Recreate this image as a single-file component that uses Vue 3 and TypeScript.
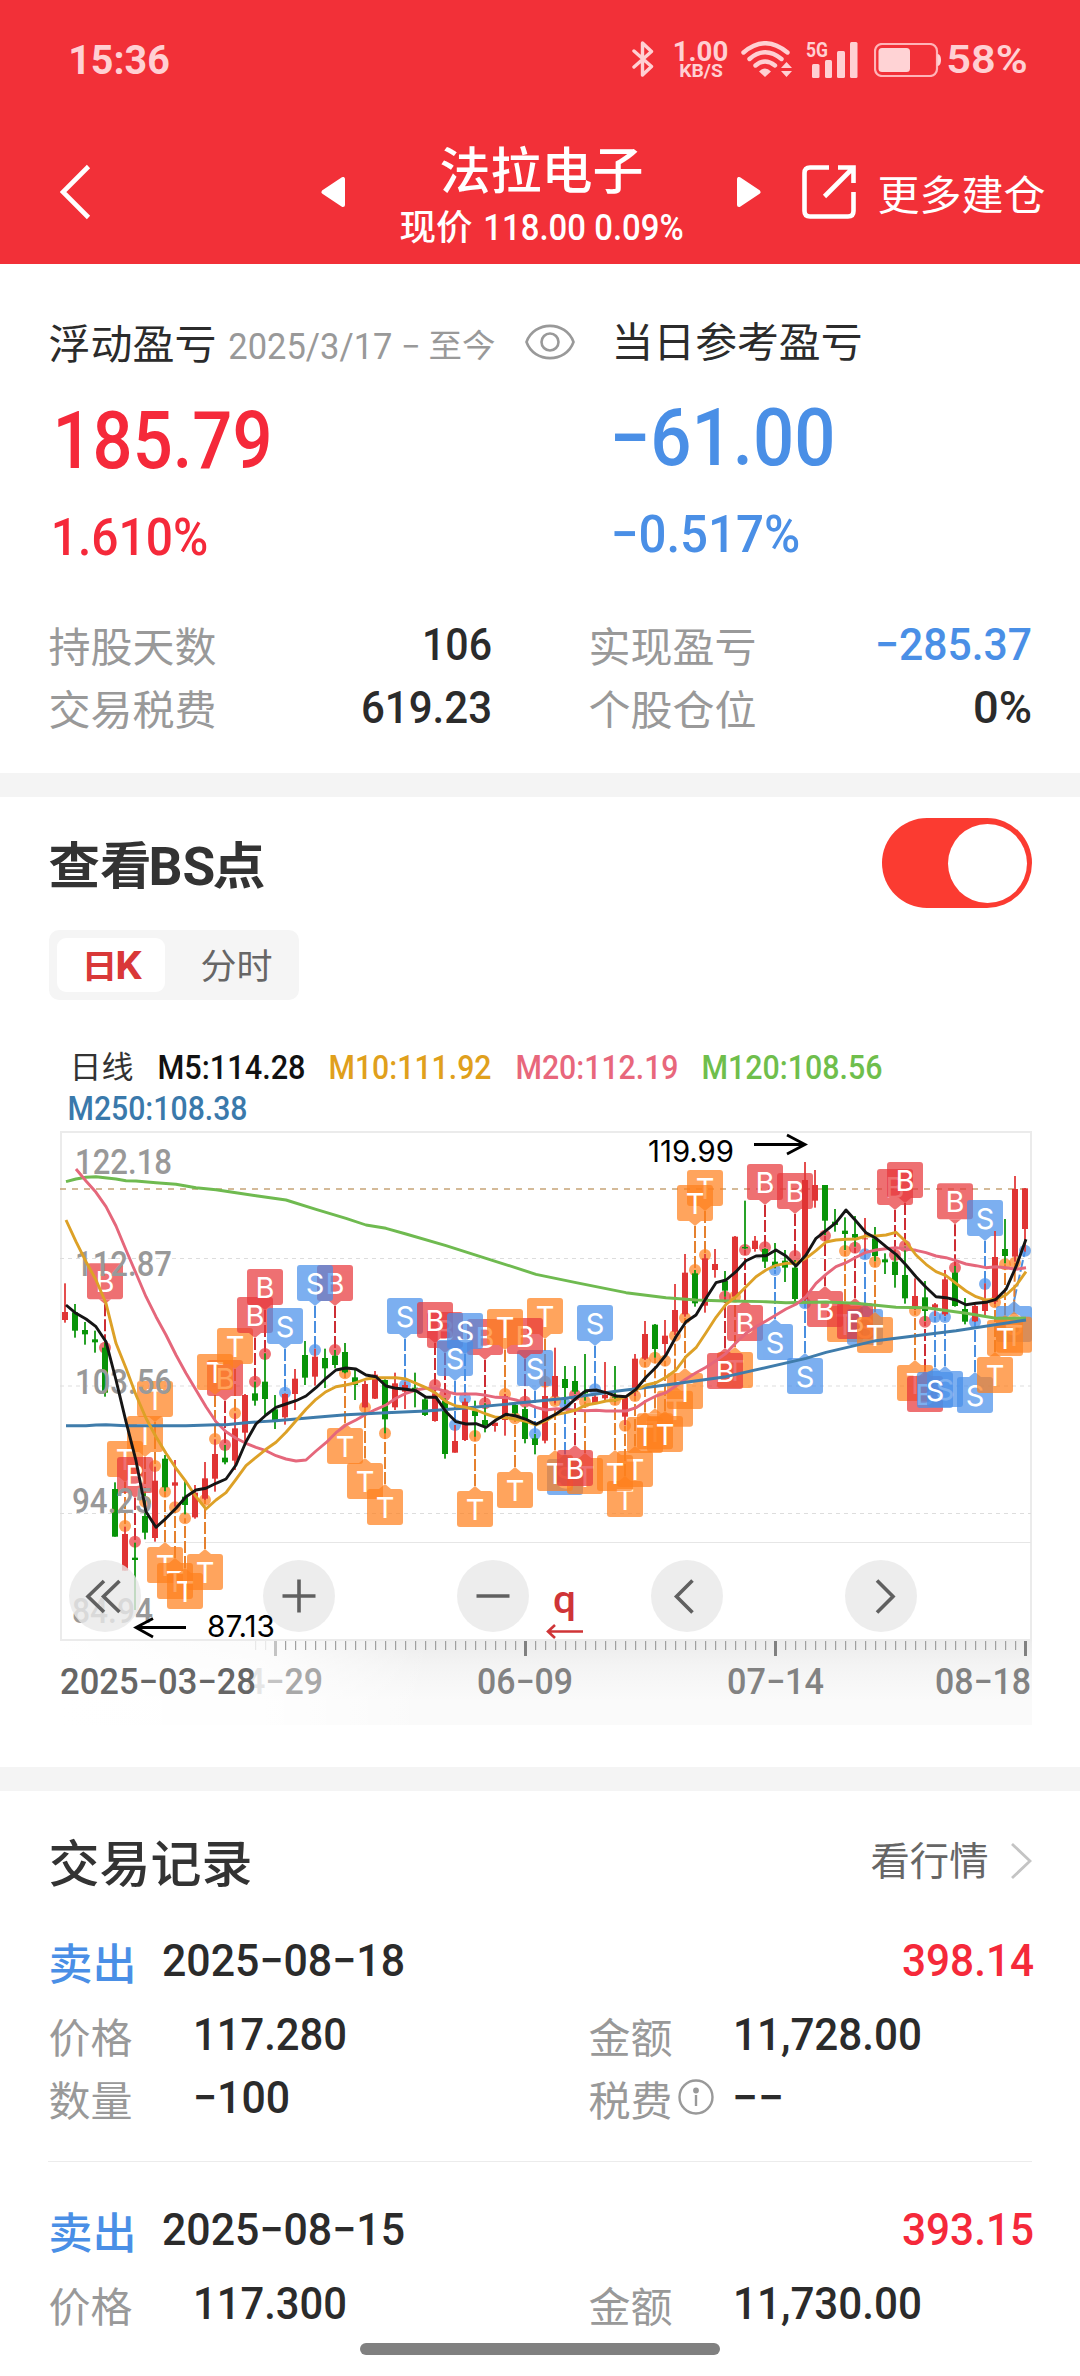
<script setup lang="ts">
import { h } from 'vue'

interface TxtProps {
  t: string
  w?: number
  cap?: number
  fs?: number
  color?: string
  weight?: number
  dy?: number
}

// Single-line label. `cap` sizes latin digits by cap height, `fs` sizes Chinese text by em box.
const Txt = (p: TxtProps) => {
  const dy = p.dy ?? 0
  const latin = p.cap !== undefined
  const size = latin ? p.cap! / 0.711 : p.fs!
  const width = p.w ?? size * p.t.length
  const height = latin ? p.cap! : size
  const bearing = latin ? size * 0.045 : 1.5
  return h('svg', { width, height, style: 'overflow:visible;flex:none;display:block' }, [
    h(
      'text',
      {
        x: -bearing,
        y: (latin ? height : size * 0.85) + dy,
        fill: p.color ?? '#2b2b2b',
        'font-size': size,
        'font-weight': p.weight ?? (latin ? 500 : 400),
        'font-family': latin ? 'Roboto, "Noto Sans", sans-serif' : '"Noto Sans CJK SC", sans-serif',
        textLength: width + bearing * 2,
        lengthAdjust: 'spacingAndGlyphs',
      },
      p.t,
    ),
  ])
}

const RED = '#f5293a'
const BLUE = '#4a8fe6'
const GREY = '#999'

const legend = [
  { t: 'M5:114.28', w: 145, c: '#111', m: 27 },
  { t: 'M10:111.92', w: 160, c: '#e0a01c', m: 26 },
  { t: 'M20:112.19', w: 160, c: '#e8677c', m: 27 },
  { t: 'M120:108.56', w: 178, c: '#6fbe4c', m: 26 },
]

// Chart geometry: one trading day every 10px, vertical data in thirds of a pixel below TOP.
const TOP = 1120
const px = (i: number) => 65 + i * 10
const py = (v: number) => TOP + v / 3

type Candle = [number, number, number, number, number] // rising, high, body top, body bottom, low
const candles: Candle[] = [
  [1, 490, 576, 600, 608], [0, 552, 577, 632, 653], [0, 606, 630, 643, 674], [0, 632, 658, 667, 698],
  [0, 668, 683, 818, 830], [0, 1087, 1107, 1250, 1250], [1, 1220, 1242, 1352, 1352], [0, 1268, 1313, 1320, 1470],
  [0, 1120, 1188, 1238, 1258], [1, 1040, 1082, 1254, 1265], [0, 1005, 1016, 1102, 1114], [1, 1020, 1087, 1097, 1160],
  [0, 1083, 1130, 1155, 1183], [1, 1095, 1118, 1192, 1196], [1, 1026, 1075, 1136, 1140], [1, 958, 1002, 1076, 1115],
  [0, 975, 1013, 1027, 1033], [1, 880, 925, 1022, 1050], [1, 822, 825, 938, 965], [0, 785, 820, 842, 857],
  [0, 700, 785, 837, 890], [0, 825, 868, 905, 927], [1, 820, 822, 892, 914], [1, 747, 776, 822, 870],
  [0, 663, 705, 773, 795], [1, 686, 710, 770, 797], [0, 686, 714, 745, 804], [0, 690, 707, 735, 745],
  [0, 669, 696, 757, 760], [0, 745, 772, 795, 840], [1, 782, 792, 862, 863], [1, 753, 764, 836, 837],
  [0, 778, 780, 898, 940], [1, 758, 790, 862, 870], [1, 785, 795, 815, 867], [0, 758, 803, 808, 862],
  [0, 830, 838, 885, 888], [1, 810, 820, 903, 905], [0, 835, 842, 1002, 1016], [1, 915, 963, 998, 998],
  [1, 835, 845, 960, 963], [0, 842, 872, 888, 950], [0, 850, 900, 915, 937], [1, 908, 908, 918, 935],
  [1, 822, 828, 900, 947], [0, 850, 855, 880, 890], [0, 860, 867, 957, 970], [0, 942, 955, 975, 1003],
  [1, 785, 828, 962, 970], [1, 683, 768, 830, 850], [0, 738, 777, 804, 852], [0, 738, 783, 815, 822],
  [0, 702, 815, 820, 842], [1, 820, 830, 850, 850], [1, 726, 825, 835, 845], [0, 738, 830, 833, 845],
  [1, 830, 832, 890, 915], [1, 702, 716, 815, 828], [1, 603, 642, 716, 720], [0, 612, 614, 687, 713],
  [1, 600, 647, 672, 705], [1, 492, 570, 635, 645], [1, 402, 458, 583, 590], [0, 450, 460, 550, 560],
  [1, 402, 415, 557, 578], [1, 387, 432, 450, 473], [0, 453, 482, 512, 530], [1, 348, 350, 530, 530],
  [0, 242, 381, 385, 388], [1, 348, 362, 387, 395], [0, 385, 387, 425, 444], [0, 369, 425, 437, 445],
  [0, 390, 422, 443, 486], [0, 420, 443, 537, 545], [1, 126, 180, 538, 545], [1, 150, 195, 242, 263],
  [0, 195, 195, 302, 345], [0, 267, 305, 315, 335], [0, 292, 332, 342, 390], [0, 288, 342, 353, 380],
  [1, 294, 355, 358, 400], [0, 321, 355, 408, 424], [0, 400, 418, 427, 462], [0, 400, 425, 465, 503],
  [0, 380, 465, 535, 551], [1, 475, 528, 560, 570], [0, 483, 532, 573, 603], [1, 549, 553, 563, 588],
  [1, 450, 478, 583, 588], [0, 438, 458, 558, 560], [0, 534, 567, 605, 613], [1, 555, 558, 604, 606],
  [1, 490, 541, 573, 585], [1, 333, 411, 545, 552], [0, 297, 387, 408, 430], [1, 168, 207, 410, 425],
  [1, 204, 205, 327, 395],
]

type Mark = [string, number, number, number] // kind, day, box top, anchor dot
const marks: Mark[] = [
  ['B', 4, 430, 683], ['T', 9, 783, 1038], ['T', 8, 888, 1145], ['T', 6, 963, 1218], ['B', 7, 1011, 1265],
  ['T', 10, 1281, 1115], ['T', 11, 1329, 1162], ['T', 12, 1359, 1195], ['T', 14, 1302, 1140],
  ['B', 16, 720, 975], ['T', 15, 702, 957], ['T', 17, 624, 880], ['B', 19, 531, 785], ['B', 20, 447, 702],
  ['S', 22, 564, 818], ['B', 27, 435, 690], ['S', 25, 435, 690], ['T', 28, 924, 760], ['T', 30, 1029, 862],
  ['T', 32, 1107, 940], ['S', 34, 534, 795], ['B', 38, 576, 825], ['B', 37, 546, 795], ['B', 42, 597, 850],
  ['S', 40, 579, 835], ['S', 39, 660, 915], ['T', 48, 534, 785], ['S', 47, 690, 942], ['B', 46, 594, 845],
  ['T', 44, 567, 822], ['S', 53, 555, 808], ['T', 41, 1113, 948], ['T', 45, 1056, 895],
  ['S', 50, 1017, 852], ['T', 49, 1005, 843], ['T', 52, 1014, 845], ['B', 51, 990, 825],
  ['T', 56, 1083, 917], ['T', 57, 993, 828], ['T', 55, 1005, 840], ['T', 59, 880, 713], ['T', 61, 812, 647],
  ['T', 58, 891, 726], ['T', 60, 888, 722], ['T', 62, 759, 594], ['T', 64, 150, 405], ['T', 63, 195, 450],
  ['T', 67, 696, 530], ['B', 66, 699, 530], ['B', 68, 555, 390], ['B', 70, 132, 382], ['S', 71, 612, 450],
  ['B', 73, 159, 408], ['S', 74, 714, 550], ['T', 78, 558, 393], ['B', 76, 513, 347], ['S', 80, 567, 403],
  ['B', 79, 549, 383], ['T', 81, 591, 426], ['B', 83, 147, 405], ['B', 84, 126, 378], ['T', 85, 735, 572],
  ['B', 86, 768, 605], ['S', 88, 753, 591], ['S', 87, 756, 591], ['B', 89, 190, 443], ['S', 92, 240, 492],
  ['S', 91, 771, 606], ['T', 93, 711, 547], ['S', 96, 558, 392], ['T', 95, 590, 428], ['T', 94, 600, 433],
]
const fills: Record<string, string> = { B: '#e8363a', S: '#478fea', T: '#ff801c' }
const strokes: Record<string, string> = { B: '#cd2d34', S: '#4a8fe0', T: '#e5812f' }
const pins = marks.map(([kind, day, top, dot]) => {
  const x = px(day)
  const cx = Math.min(x, 1014)
  const y = py(top)
  const above = top < dot
  const tip = above ? y + 41 : y - 5
  const base = above ? y + 36 : y
  return {
    kind, x, cx, y, tip, dot: py(dot), fill: fills[kind], stroke: strokes[kind],
    arrow: `M${cx - 6} ${base}L${cx} ${tip}L${cx + 6} ${base}Z`,
  }
})

const m5 = [555, 580, 597, 620, 665, 780, 905, 1022, 1175, 1222, 1195, 1165, 1130, 1110, 1105, 1090, 1077, 1035, 965, 912, 885, 862, 852, 842, 828, 803, 775, 750, 744, 747, 765, 770, 798, 805, 808, 812, 832, 832, 875, 905, 912, 911, 922, 900, 883, 888, 898, 913, 898, 882, 862, 835, 812, 810, 818, 828, 830, 808, 772, 742, 705, 650, 605, 585, 535, 488, 480, 455, 422, 408, 407, 390, 408, 438, 405, 355, 332, 308, 270, 303, 338, 355, 380, 403, 435, 470, 502, 530, 533, 540, 554, 550, 547, 538, 508, 440, 358]
const m10 = [300, 365, 425, 480, 550, 670, 745, 825, 895, 950, 1000, 1045, 1085, 1130, 1167, 1140, 1118, 1078, 1037, 1012, 988, 967, 937, 902, 868, 838, 815, 800, 795, 788, 777, 773, 773, 773, 777, 790, 803, 820, 845, 858, 862, 870, 882, 892, 893, 898, 904, 915, 902, 884, 878, 870, 855, 850, 843, 840, 830, 810, 795, 788, 772, 750, 710, 683, 638, 592, 553, 530, 500, 470, 450, 436, 430, 430, 415, 392, 366, 360, 358, 357, 348, 348, 345, 337, 365, 405, 433, 455, 467, 490, 513, 530, 540, 538, 525, 497, 455]
const m20 = [147, 183, 217, 260, 318, 390, 460, 530, 590, 645, 705, 760, 810, 860, 905, 935, 955, 970, 982, 992, 1007, 1017, 1023, 1020, 993, 968, 938, 915, 900, 883, 868, 855, 835, 820, 810, 805, 805, 815, 822, 822, 822, 826, 832, 833, 840, 850, 862, 870, 866, 868, 871, 872, 871, 873, 873, 873, 863, 843, 828, 818, 797, 777, 758, 742, 722, 700, 668, 640, 620, 603, 585, 567, 553, 530, 490, 463, 440, 428, 412, 397, 390, 386, 383, 387, 391, 398, 408, 413, 422, 432, 437, 443, 440, 443, 448, 443]
const m120: [number, number][] = [[0, 185], [1, 177], [2, 172], [3, 170], [5, 177], [6, 182], [7, 183], [9, 188], [11, 193], [13, 203], [15, 209], [17, 218], [19, 227], [22, 240], [25, 268], [28, 295], [30, 315], [32, 325], [34, 342], [38, 377], [42, 415], [47, 463], [51, 488], [56, 518], [60, 533], [63, 540], [66, 543], [70, 545], [72, 548], [76, 546], [79, 550], [83, 562], [86, 563], [90, 580], [93, 595], [96, 595]]
const m250: [number, number][] = [[0, 917], [2, 917], [3, 915], [4, 914], [6, 917], [12, 917], [15, 914], [16, 914], [18, 908], [21, 902], [25, 892], [28, 884], [32, 878], [36, 873], [40, 864], [45, 850], [50, 835], [55, 814], [60, 795], [66, 770], [74, 715], [76, 697], [81, 662], [85, 647], [89, 632], [96, 600]]
const path = (pts: [number, number][]) => pts.map(([i, v]) => `${px(i) + 1},${py(v).toFixed(1)}`).join(' ')
const series = [
  { c: '#6fba50', p: path(m120) },
  { c: '#e5677b', p: path(m20.map((v, i) => [i + 1, v] as [number, number])) },
  { c: '#3f7cab', p: path(m250) },
  { c: '#dda127', p: path(m10.map((v, i) => [i, v] as [number, number])) },
  { c: '#151515', p: path(m5.map((v, i) => [i, v] as [number, number])) },
]

const prices = [
  { t: '122.18', x: 76, y: 1174, w: 97 },
  { t: '112.87', x: 76, y: 1276, w: 97 },
  { t: '103.56', x: 76, y: 1394, w: 97 },
  { t: '94.25', x: 73, y: 1513, w: 80 },
  { t: '84.94', x: 73, y: 1623, w: 81 },
]
const dates = [
  { t: '06−09', x: 477, w: 96, c: '#828282' },
  { t: '07−14', x: 727, w: 97, c: '#828282' },
  { t: '08−18', x: 935, w: 96, c: '#828282' },
]
const ticks = Array.from({ length: 78 }, (_, k) => k + 19).filter((i) => (i - 21) % 25 !== 0)
const majors = [21, 46, 71, 96]

const records = [
  { date: '2025−08−18', profit: '398.14', price: '117.280', amount: '11,728.00', full: true },
  { date: '2025−08−15', profit: '393.15', price: '117.300', amount: '11,730.00', full: false },
]
</script>

<template>
  <div class="page">
    <header class="header">
      <div class="status">
        <Txt t="15:36" :w="98" :cap="29" color="#ffd0d3" :weight="700" />
        <div class="status-right">
          <svg width="22" height="36" viewBox="0 0 22 36" fill="none" stroke="#ffd0d3" stroke-width="3.4" stroke-linejoin="round" stroke-linecap="round"><path d="M2 10L19.500 25.500L10.500 34V2L19.500 10.500L2 26" /></svg>
          <div class="speed">
            <Txt t="1.00" :w="53" :cap="20" color="#ffd0d3" :weight="700" />
            <Txt t="KB/S" :w="42" :cap="13" color="#ffd0d3" :weight="700" />
          </div>
          <svg class="wifi" width="52" height="36" viewBox="0 0 52 36">
            <g fill="none" stroke="#ffd0d3" stroke-width="4.400" stroke-linecap="round">
              <path d="M2.500 11.500Q24 -7 46.500 11.500" /><path d="M8.500 18Q24 4.500 40.500 18" /><path d="M14.500 24.500Q24 16.500 34 24.500" />
            </g>
            <path d="M18 30.500Q24 24.500 30 30.500L24 36Z" fill="#ffd0d3" />
            <path d="M40 27L45.500 21L51 27ZM40 30L45.500 36L51 30Z" fill="#ffd0d3" />
          </svg>
          <svg class="signal" width="52" height="37" viewBox="0 0 52 37">
            <text x="0" y="16" font-family="Roboto, sans-serif" font-size="21" font-weight="700" fill="#ffd0d3" textLength="22" lengthAdjust="spacingAndGlyphs">5G</text>
            <g fill="#ffd0d3"><rect x="6" y="23" width="7.500" height="14" rx="1.500" /><rect x="19" y="19" width="7" height="18" rx="1.500" /><rect x="31" y="10" width="8" height="27" rx="1.500" /><rect x="44" y="1" width="7.500" height="36" rx="1.500" /></g>
          </svg>
          <svg class="battery" width="67" height="34" viewBox="0 0 67 34">
            <rect x="1" y="1" width="62" height="32" rx="7" fill="none" stroke="#ffb4b8" stroke-width="2.200" />
            <rect x="4.500" y="5" width="31.500" height="24" rx="3.500" fill="#ffd3d5" />
            <path d="M63.500 11H64Q67 12 67 17T64 23H63.500Z" fill="#ffd3d5" />
          </svg>
          <Txt t="58%" :w="78" :cap="27" color="#ffd0d3" :weight="600" />
        </div>
      </div>
      <div class="nav">
        <svg width="31" height="56" viewBox="0 0 31 56" fill="none" stroke="#fff" stroke-width="4.600"><path d="M28.500 2.500L3 28L28.500 53.500" /></svg>
        <svg class="prev" width="25" height="30" viewBox="0 0 25 30" fill="#fff" stroke="#fff" stroke-width="4" stroke-linejoin="round"><path d="M22 2V28L2.500 15Z" /></svg>
        <div class="title">
          <Txt t="法拉电子" :fs="50" :w="201" :weight="500" color="#fff" />
          <div class="quote">
            <Txt t="现价" :fs="35.500" :w="70" :weight="500" color="#fff" :dy="1" />
            <Txt t="118.00 0.09%" :w="197" :cap="26" color="#fff" />
          </div>
        </div>
        <svg class="next" width="25" height="30" viewBox="0 0 25 30" fill="#fff" stroke="#fff" stroke-width="4" stroke-linejoin="round"><path d="M3 2V28L22.500 15Z" /></svg>
        <svg class="share" width="54" height="54" viewBox="0 0 54 54" fill="none" stroke="#fff" stroke-width="4.600"><path d="M27 2.500H8Q2.500 2.500 2.500 8V46Q2.500 51.500 8 51.500H46Q51.500 51.500 51.500 46V27M36 2.500H51.500V18M51 3L22.500 31.500" /></svg>
        <Txt class="more" t="更多建仓" :fs="41" :w="165" :dy="3" color="#fff" />
      </div>
    </header>

    <section class="summary">
      <div class="totals">
        <div class="total">
          <div class="total-head">
            <Txt t="浮动盈亏" :fs="41" :w="165" />
            <Txt class="since" t="2025/3/17 −" :w="189" :cap="26" :dy="2" :color="GREY" :weight="400" />
            <Txt class="now" t="至今" :fs="32" :w="64" :dy="2" :color="GREY" />
            <svg class="eye" width="50" height="36" viewBox="0 0 50 36" fill="none" stroke="#999" stroke-width="2.600"><path d="M1.500 18C9 -3.500 41 -3.500 48.500 18C41 39.500 9 39.500 1.500 18Z" /><circle cx="25" cy="18" r="8.500" /></svg>
          </div>
          <Txt class="big" t="185.79" :w="213" :cap="56" :color="RED" />
          <Txt class="rate" t="1.610%" :w="153" :cap="37" :color="RED" />
        </div>
        <div class="total today">
          <div class="total-head"><Txt t="当日参考盈亏" :fs="41" :w="248" :dy="1.500" /></div>
          <Txt class="big" t="−61.00" :w="219" :cap="56" :color="BLUE" />
          <Txt class="rate" t="−0.517%" :w="185" :cap="37" :color="BLUE" />
        </div>
      </div>
      <div class="stats">
        <div class="stat"><Txt t="持股天数" :fs="41" :w="165" :dy="3" :color="GREY" /><Txt t="106" :w="66" :cap="32" /></div>
        <div class="stat"><Txt t="实现盈亏" :fs="41" :w="165" :dy="3" :color="GREY" /><Txt t="−285.37" :w="153" :cap="32" :color="BLUE" /></div>
        <div class="stat"><Txt t="交易税费" :fs="41" :w="165" :dy="3" :color="GREY" /><Txt t="619.23" :w="127" :cap="32" /></div>
        <div class="stat"><Txt t="个股仓位" :fs="41" :w="165" :dy="3" :color="GREY" /><Txt t="0%" :w="55" :cap="32" /></div>
      </div>
    </section>

    <section class="points">
      <div class="points-head">
        <div class="points-title">
          <Txt t="查看" :fs="50" :w="100" :weight="700" color="#333" />
          <Txt t="BS" :cap="38" :w="62" :weight="700" color="#333" />
          <Txt t="点" :fs="50" :w="50" :weight="700" color="#333" />
        </div>
        <div class="toggle"><span class="knob"></span></div>
      </div>
      <div class="tabs">
        <div class="tab on"><Txt t="日" :fs="33" :w="33" :weight="700" color="#d93838" :dy="1" /><Txt t="K" :cap="27" :w="23" :weight="700" color="#d93838" /></div>
        <div class="tab"><Txt t="分时" :fs="35" :w="69" color="#666" :dy="1" /></div>
      </div>
      <div class="legend">
        <Txt t="日线" :fs="31" :w="61" color="#333" />
        <Txt v-for="l in legend" :key="l.t" :t="l.t" :w="l.w" :cap="24" :color="l.c" :style="{ marginLeft: l.m + 'px' }" />
      </div>
      <div class="legend second"><Txt t="M250:108.38" :w="177" :cap="24" color="#3a79ab" /></div>

      <svg class="chart" width="1080" height="642" viewBox="0 1125 1080 642">
        <defs>
          <linearGradient id="axis" x1="0" y1="0" x2="0" y2="1"><stop offset="0" stop-color="#ececec" /><stop offset=".3" stop-color="#f4f4f4" /><stop offset=".7" stop-color="#fafafa" /></linearGradient>
          <linearGradient id="fade" x1="0" y1="0" x2="1" y2="0"><stop offset="0" stop-color="#fff" /><stop offset=".55" stop-color="#fff" stop-opacity=".8" /><stop offset="1" stop-color="#fff" stop-opacity="0" /></linearGradient>
        </defs>
        <rect x="60" y="1641" width="972" height="84" fill="url(#axis)" />
        <rect x="60" y="1641" width="370" height="84" fill="url(#fade)" />
        <rect x="61" y="1132" width="970" height="508" fill="none" stroke="#ebebeb" stroke-width="2" />
        <path d="M60 1258.500H1031M60 1386H1031M60 1513.500H1031" stroke="#ddd" stroke-width="1.200" stroke-dasharray="4 4" />
        <path d="M145 1542.500H1031" stroke="#e6e6e6" stroke-width="1.200" />
        <path d="M60 1189H1031" stroke="#c6a477" stroke-width="1.700" stroke-dasharray="6 6" />

        <g v-for="(p, i) in pins" :key="'d' + i">
          <line :x1="p.cx" :y1="p.tip" :x2="p.x" :y2="p.dot" :stroke="p.stroke" stroke-width="2" stroke-dasharray="12 3" />
          <circle :cx="p.x" :cy="p.dot" r="6" :fill="p.fill" opacity=".7" />
        </g>
        <g v-for="(p, i) in pins" :key="'b' + i">
          <g :fill="p.fill" opacity=".71"><rect :x="p.cx - 18" :y="p.y" width="36" height="36" rx="3" /><path :d="p.arrow" /></g>
          <text :x="p.cx" :y="p.y + 29" class="pin">{{ p.kind }}</text>
        </g>
        <g v-for="(c, i) in candles" :key="'c' + i" :fill="c[0] ? '#e03434' : '#089408'">
          <rect :x="px(i) - 1" :y="py(c[1])" width="2" :height="(c[4] - c[1]) / 3" opacity=".87" />
          <rect :x="px(i) - 3" :y="py(c[2])" width="6" :height="(c[3] - c[2]) / 3" />
        </g>
        <text v-for="p in prices" :key="p.t" :x="p.x - 1" :y="p.y" :textLength="p.w" lengthAdjust="spacingAndGlyphs" class="price">{{ p.t }}</text>
        <polyline v-for="s in series" :key="s.c" :points="s.p" fill="none" :stroke="s.c" stroke-width="2.900" stroke-linejoin="round" />

        <g fill="none" stroke="#000" stroke-width="2.800">
          <path d="M754 1144.500H805M787 1135L805 1144.500L787 1154" />
          <path d="M186 1627.500H136M153 1618.500L136 1627.500L153 1637" />
        </g>
        <text x="648" y="1162" class="peak" textLength="86" lengthAdjust="spacingAndGlyphs">119.99</text>

        <g fill="#e9e9e9" fill-opacity=".8"><circle v-for="x in [105, 299, 493, 687, 881]" :key="x" :cx="x" cy="1596" r="36" /></g>
        <g fill="none" stroke="#606060" stroke-width="3.600">
          <path d="M104 1581L88 1596.500L104 1612M119.500 1581L103.500 1596.500L119.500 1612" />
          <path d="M282.500 1596H315.500M299 1579.500V1612.500" />
          <path d="M476.500 1596H509.500" />
          <path d="M692.500 1580.500L676.500 1596.500L692.500 1612.500" />
          <path d="M877 1580.500L893 1596.500L877 1612.500" />
        </g>
        <text x="207" y="1637" class="peak" textLength="68" lengthAdjust="spacingAndGlyphs">87.13</text>
        <text x="553" y="1613" class="right-mark" textLength="23" lengthAdjust="spacingAndGlyphs">q</text>
        <path d="M583 1631.500H548M555 1625L548 1631.500L555 1638" fill="none" stroke="#cf3437" stroke-width="2.600" />

        <rect v-for="i in ticks" :key="'t' + i" :x="px(i)" y="1641" width="1.200" height="9" :fill="i < 21 ? '#e8e8e8' : '#a0a0a0'" />
        <rect v-for="i in majors" :key="'m' + i" :x="px(i) - 1" y="1641" width="3" height="15" :fill="i === 21 ? '#c4c4c4' : '#808080'" />
        <text x="246" y="1694" class="date" textLength="77" lengthAdjust="spacingAndGlyphs"><tspan fill="#e6e6e6">4</tspan><tspan fill="#c4c4c4">−</tspan><tspan fill="#a8a8a8">29</tspan></text>
        <text x="60" y="1694" class="date" fill="#666" textLength="196" lengthAdjust="spacingAndGlyphs">2025−03−28</text>
        <text v-for="d in dates" :key="d.t" :x="d.x" y="1694" class="date" :fill="d.c" :textLength="d.w" lengthAdjust="spacingAndGlyphs">{{ d.t }}</text>
      </svg>
    </section>

    <section class="records">
      <div class="records-head">
        <Txt t="交易记录" :fs="50" :w="201" :weight="500" color="#333" />
        <div class="link">
          <Txt t="看行情" :fs="39" :w="115" color="#666" />
          <svg width="22" height="38" viewBox="0 0 22 38" fill="none" stroke="#c4c4c4" stroke-width="2.800"><path d="M2 2L20 19L2 36" /></svg>
        </div>
      </div>
      <article v-for="r in records" :key="r.date" class="record">
        <div class="line first">
          <Txt t="卖出" :fs="43" :w="85" :weight="500" :color="BLUE" :dy="4" />
          <Txt class="day" :t="r.date" :w="239" :cap="32" />
          <Txt class="profit" :t="r.profit" :w="128" :cap="32" :color="RED" />
        </div>
        <div class="line fields">
          <div class="field"><Txt t="价格" :fs="41" :w="81" :dy="4" :color="GREY" /><Txt class="value" :t="r.price" :w="150" :cap="32" /></div>
          <div class="field"><Txt t="金额" :fs="41" :w="81" :dy="4" :color="GREY" /><Txt class="value" :t="r.amount" :w="185" :cap="32" /></div>
        </div>
        <div v-if="r.full" class="line fields">
          <div class="field"><Txt t="数量" :fs="41" :w="81" :dy="4" :color="GREY" /><Txt class="value" t="−100" :w="93" :cap="32" /></div>
          <div class="field">
            <Txt t="税费" :fs="41" :w="81" :dy="4" :color="GREY" />
            <svg class="info" width="36" height="36" viewBox="0 0 36 36" fill="none" stroke="#999" stroke-width="2.400"><circle cx="18" cy="18" r="16.500" /><path d="M18 16V27" /><circle cx="18" cy="11.500" r="1.700" fill="#999" /></svg>
            <Txt class="fee" t="−−" :w="48" :cap="32" />
          </div>
        </div>
      </article>
    </section>
    <div class="home"></div>
  </div>
</template>

<style>
body { margin: 0; background: #fff; }
</style>

<style scoped>
.page { position: relative; width: 1080px; height: 2376px; overflow: hidden; background: #fff; font-family: Roboto, "Noto Sans CJK SC", sans-serif; }
svg { display: block; flex: none; }
.header { height: 264px; background: #f23038; }
.status { display: flex; align-items: center; height: 118px; padding: 0 54px 0 70px; }
.status-right { display: flex; align-items: center; margin-left: auto; }
.speed { display: flex; flex-direction: column; align-items: center; gap: 3px; margin-left: 20px; }
.wifi { margin-left: 14px; }
.signal { margin-left: 13px; overflow: visible; }
.battery { margin: 2px 7px 0 16px; }
.nav { display: flex; align-items: center; height: 148px; padding-left: 60px; }
.prev { margin-left: 230px; }
.title { display: flex; flex-direction: column; align-items: center; width: 282px; margin: 6px 0 0 54px; gap: 14px; }
.quote { display: flex; align-items: center; gap: 14px; height: 34px; }
.next { margin-left: 54px; }
.share { margin-left: 41px; }
.more { margin-left: 23px; }

.summary { box-sizing: border-box; height: 509px; padding: 58px 50px 0; }
.totals { display: grid; grid-template-columns: 563px 1fr; }
.today { margin-top: -3px; }
.total-head { display: flex; align-items: center; height: 44px; }
.since { margin-left: 15px; }
.now { margin-left: 11px; }
.eye { margin: -4px 0 0 31px; }
.big { margin: 46px 0 0 6px; }
.rate { margin: 50px 0 0 3px; }
.today .big, .today .rate { margin-left: 0; }
.stats { display: grid; grid-template-columns: 440px 440px; column-gap: 100px; row-gap: 23px; margin-top: 69px; }
.stat { display: flex; align-items: center; justify-content: space-between; height: 40px; }

.points { box-sizing: border-box; height: 994px; border-top: 24px solid #f4f4f4; }
.points-head { display: flex; align-items: center; justify-content: space-between; height: 90px; margin: 21px 48px 0 50px; }
.points-title { display: flex; align-items: center; gap: 1px; margin-top: 5px; }
.toggle { box-sizing: border-box; display: flex; justify-content: flex-end; align-items: center; width: 150px; height: 90px; padding-right: 5px; border-radius: 45px; background: #fb3b31; }
.knob { width: 79px; height: 79px; border-radius: 50%; background: #fff; }
.tabs { box-sizing: border-box; display: flex; width: 250px; height: 70px; margin: 22px 0 0 49px; padding: 8px; border-radius: 10px; background: #f5f5f5; }
.tab { display: flex; align-items: center; justify-content: center; flex: 1; padding-left: 16px; }
.tab.on { flex: none; width: 108px; padding: 0; gap: 1px; border-radius: 9px; background: #fff; }
.legend { display: flex; align-items: center; height: 40px; margin: 47px 0 0 71px; }
.legend.second { margin: 1px 0 0 69px; }
.chart { margin-top: -3px; }
.pin { font: 400 29px Inter, Roboto, sans-serif; fill: #fff; text-anchor: middle; }
.price { font: 500 35px Roboto, sans-serif; fill: #999; }
.date { font: 500 36px Roboto, sans-serif; }
.peak { font: 400 30px Inter, Roboto, sans-serif; fill: #000; }
.right-mark { font: 500 39px Roboto, sans-serif; fill: #cf3437; }

.records { border-top: 24px solid #f4f4f4; }
.records-head { display: flex; align-items: center; justify-content: space-between; height: 50px; padding: 48px 48px 0 50px; }
.link { display: flex; align-items: center; gap: 23px; margin-top: -6px; }
.record { height: 206px; margin: 0 48px; padding: 50px 0 16px 2px; }
.record + .record { border-top: 1.5px solid #ececec; padding-top: 46px; }
.line { display: flex; align-items: center; height: 42px; }
.fields { margin-top: 32px; }
.fields + .fields { margin-top: 21px; }
.day { margin-left: 29px; }
.profit { margin-left: auto; }
.field { display: flex; align-items: center; flex: none; width: 540px; }
.value { margin-left: 64px; }
.info { margin-left: 7px; }
.fee { margin-left: 20px; }
.home { position: absolute; left: 360px; top: 2343px; width: 360px; height: 12px; border-radius: 6px; background: #808080; }
</style>
